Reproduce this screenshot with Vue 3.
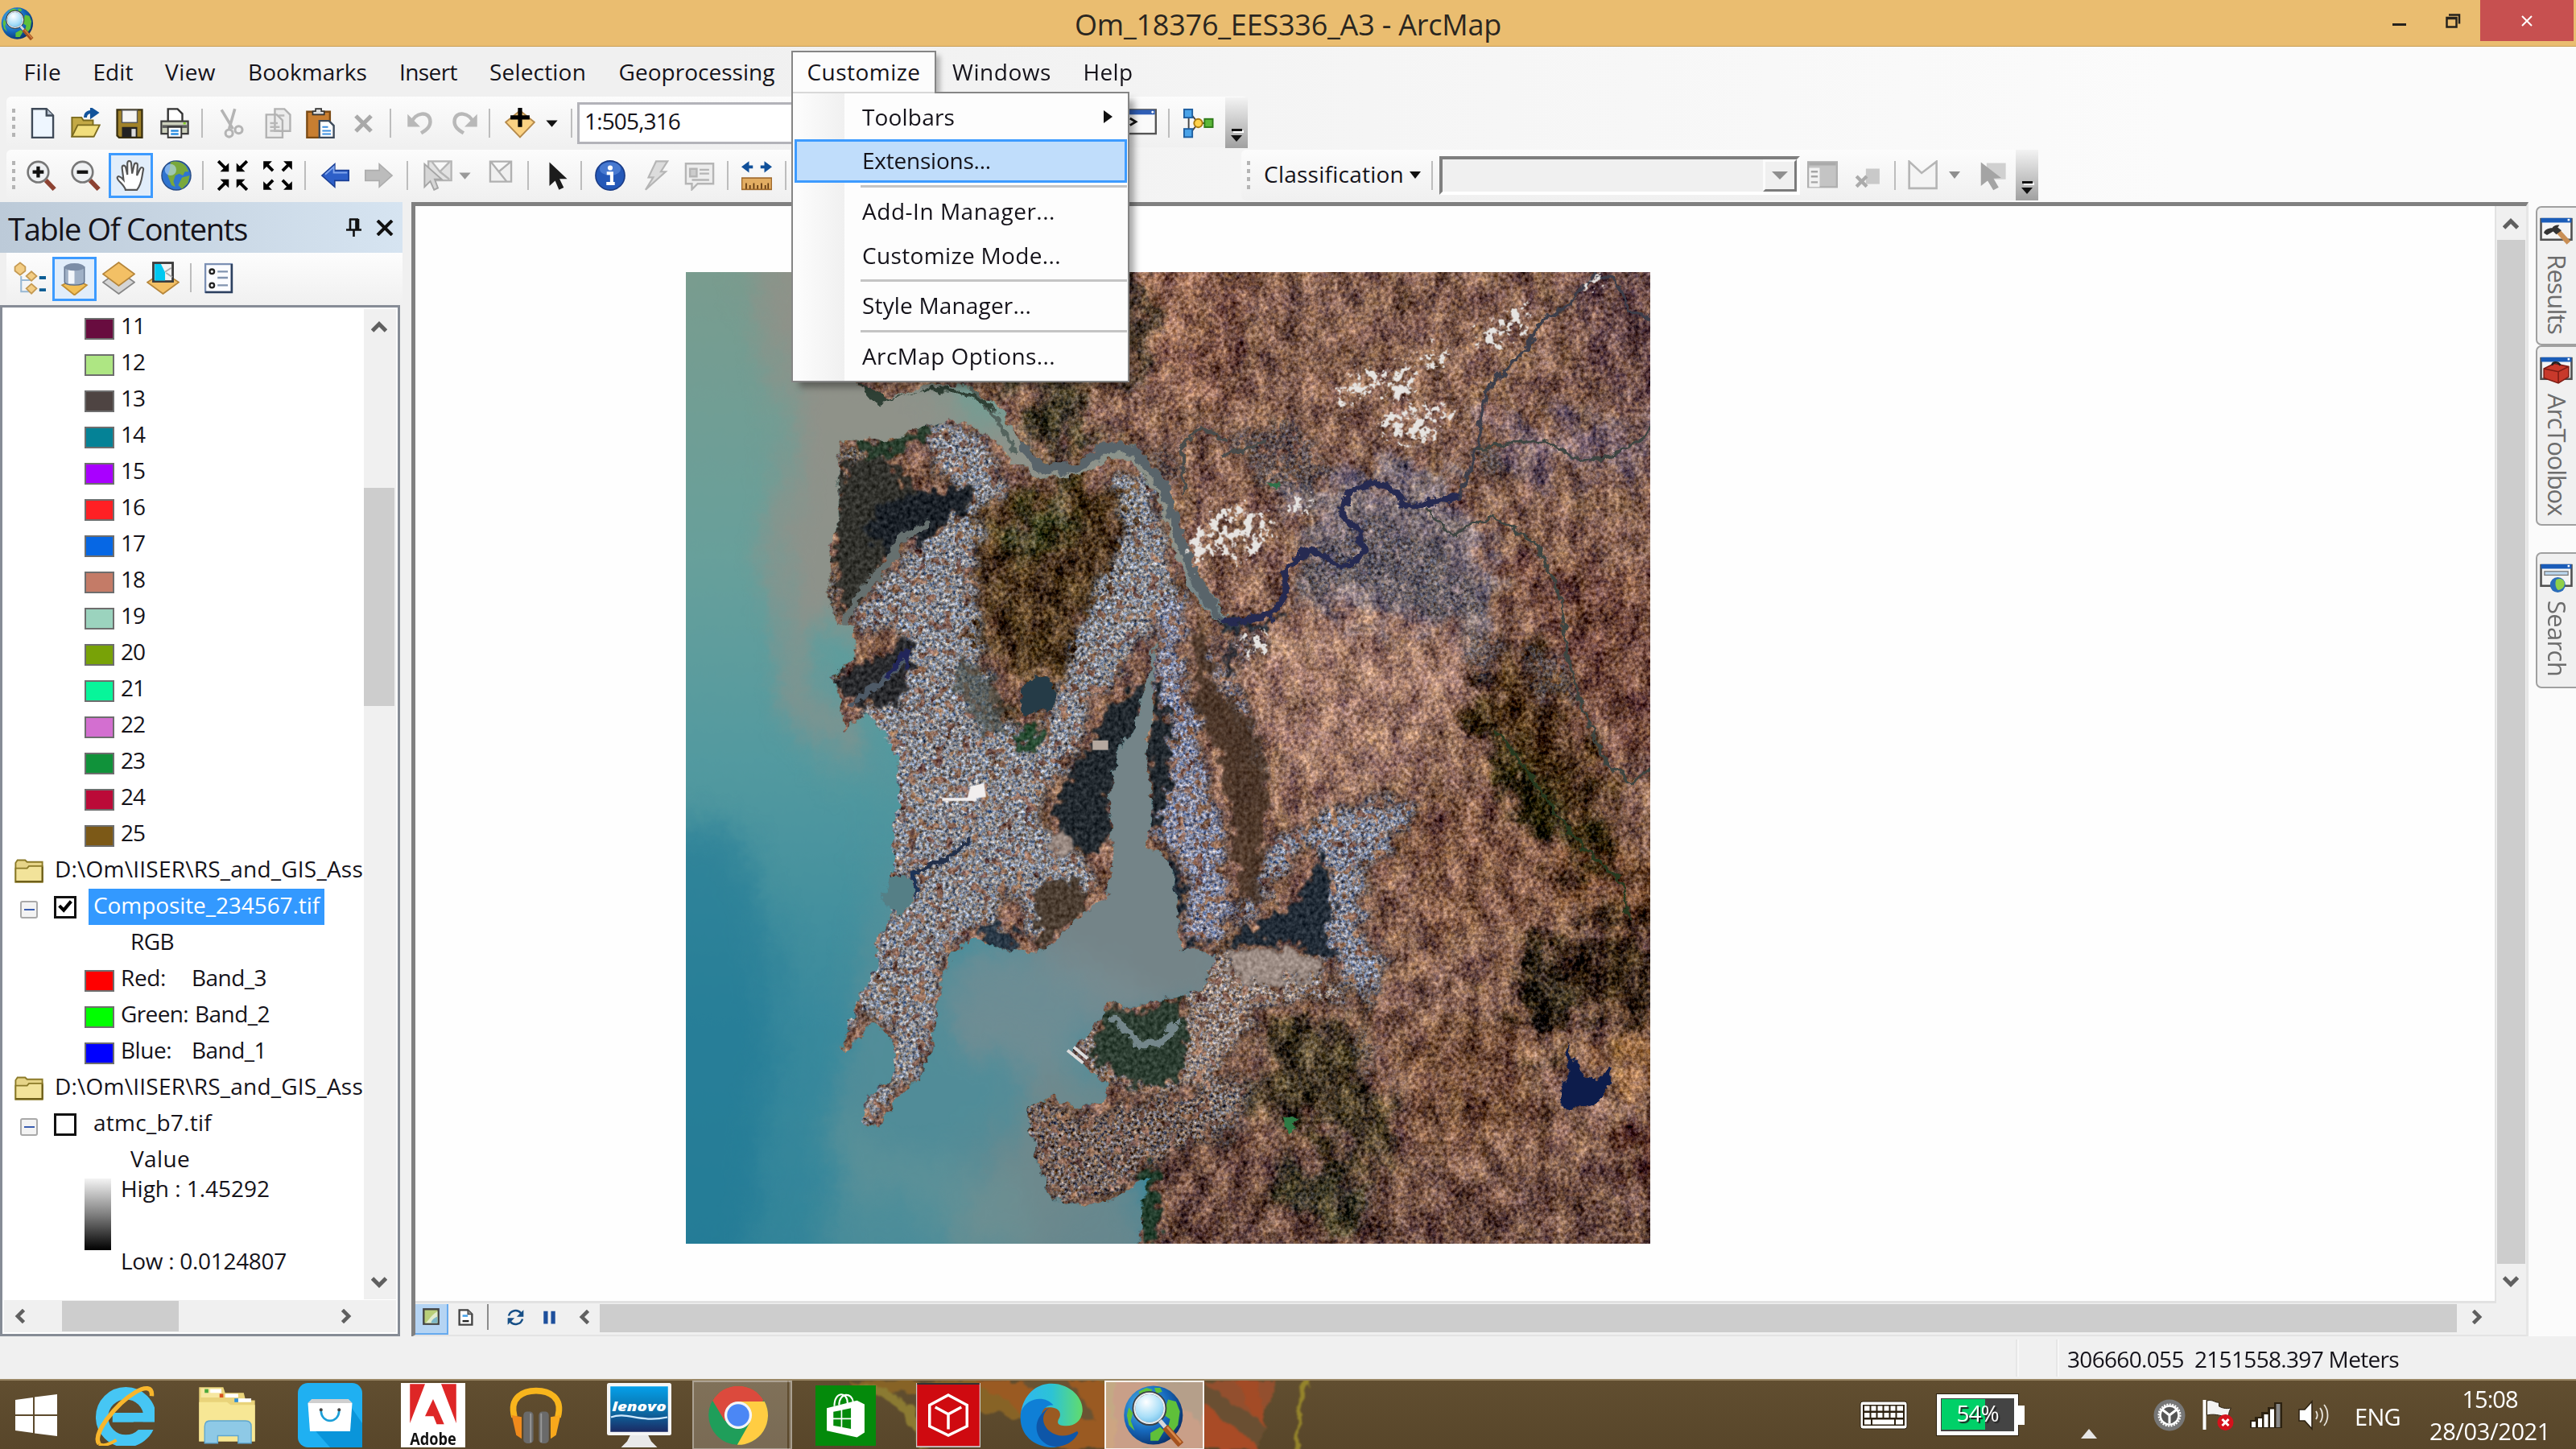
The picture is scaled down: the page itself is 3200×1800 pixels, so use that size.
<script setup>
// Spreads the letters of a label so that it takes the given width in pixels.
const vFit = {
  mounted(el, { value }) {
    if (!value) return
    const n = el.textContent.length
    const natural = el.getBoundingClientRect()
    const size = Math.max(natural.width, natural.height > 60 ? natural.height : 0)
    el.style.letterSpacing = ((value - size) / n).toFixed(3) + 'px'
  }
}

const menus = [
  { t: 'File', w: 86, f: 47 }, { t: 'Edit', w: 89, f: 50 }, { t: 'View', w: 103, f: 63 },
  { t: 'Bookmarks', w: 188, f: 148 }, { t: 'Insert', w: 112, f: 72 }, { t: 'Selection', w: 160, f: 120 },
  { t: 'Geoprocessing', w: 235, f: 194 }, { t: 'Customize', w: 180, f: 141, open: true },
  { t: 'Windows', w: 163, f: 123 }, { t: 'Help', w: 101, f: 62 }
]

const dropdown = [
  { t: 'Toolbars', f: 115, sub: true }, { t: 'Extensions...', f: 160, hot: true }, { sep: true },
  { t: 'Add-In Manager...', f: 240 }, { t: 'Customize Mode...', f: 247 }, { sep: true },
  { t: 'Style Manager...', f: 210 }, { sep: true }, { t: 'ArcMap Options...', f: 240 }
]

// k: icon name, g: gap before it
const standardBar = [
  { k: 'doc', g: 15 }, { k: 'open', g: 15 }, { k: 'save', g: 17 }, { k: 'print', g: 18 }, { sep: 1, g: 14 },
  { k: 'cut', g: 16 }, { k: 'copy', g: 20 }, { k: 'paste', g: 15 }, { k: 'del', g: 20 }, { sep: 1, g: 15 },
  { k: 'undo', g: 18 }, { k: 'redo', g: 19 }, { sep: 1, g: 12 }, { k: 'add', g: 18 }, { k: 'caret', g: 2 }, { sep: 1, g: 4 }
]
const toolsBar = [
  { k: 'zoomin', g: 13 }, { k: 'zoomout', g: 17 }, { k: 'hand', g: 10, on: true }, { k: 'globe', g: 10 }, { sep: 1, g: 13 },
  { k: 'inward', g: 17 }, { k: 'outward', g: 18 }, { sep: 1, g: 14 }, { k: 'back', g: 18 }, { k: 'fwd', g: 15 }, { sep: 1, g: 16 },
  { k: 'selfeat', g: 18 }, { k: 'caretg', g: -4 }, { k: 'clear', g: 8 }, { sep: 1, g: 17 }, { k: 'pointer', g: 18 }, { sep: 1, g: 13 },
  { k: 'info', g: 16 }, { k: 'bolt', g: 19 }, { k: 'note', g: 16 }, { sep: 1, g: 15 }, { k: 'measure', g: 16 }, { sep: 1, g: 16 }
]

const classes = [
  ['11', '#680c3f'], ['12', '#aee683'], ['13', '#4e4442'], ['14', '#058296'], ['15', '#a900ff'],
  ['16', '#ff2024'], ['17', '#0667e4'], ['18', '#c47b67'], ['19', '#9bd3be'], ['20', '#78a207'],
  ['21', '#07f59a'], ['22', '#d36fd0'], ['23', '#10923a'], ['24', '#bb0a38'], ['25', '#7c5917']
]
const bands = [
  { c: '#ff0000', n: 'Red:', nf: 56, w: 88, b: 'Band_3' },
  { c: '#00ff00', n: 'Green:', nf: 84, w: 92, b: 'Band_2' },
  { c: '#0000ff', n: 'Blue:', nf: 63, w: 88, b: 'Band_1' }
]
const docks = [
  { k: 'dResults', t: 'Results', f: 99, h: 173 },
  { k: 'dToolbox', t: 'ArcToolbox', f: 151, h: 224 },
  { k: 'dSearch', t: 'Search', f: 94, h: 169, gap: 33 }
]
const tasks = [
  { k: 'ie', s: 76 }, { k: 'explorer', s: 74 }, { k: 'bag', s: 80 }, { k: 'adobe', s: 80 }, { k: 'phones', s: 72 },
  { k: 'lenovo', s: 80 }, { k: 'chrome', s: 76, run: true }, { k: 'store', s: 75 }, { k: 'cube', s: 80 },
  { k: 'edge', s: 80 }, { k: 'arcmap', s: 78, active: true }
]

const arcGlobe = `
 <circle cx="15.5" cy="16" r="15" fill="url(#ocean)"/>
 <path d="M8 4l4-2 3 1-2 3-4 1zM16 2l3 0 1 2-3 1zM23 8l4 1 2 5-1 7-3 4-2-3 1-4-3-2-2-4 3-1zM3 12l2 3-1 4 2 5-3-3-1-5zM14 25l5-3 2 2-3 5-4 0z" fill="#5fc03a"/>
 <circle cx="13.500" cy="12.500" r="8" fill="url(#lens)" stroke="#3b4045" stroke-width="1.6"/>
 <circle cx="13.500" cy="12.500" r="7.600" fill="none" stroke="#e6ebee" stroke-width=".9"/>
 <path d="M18.800 18.800l3 3.500" stroke="#d8d8d8" stroke-width="2.200"/>
 <path d="M21.500 22l8 9" stroke="#a4521f" stroke-width="3.600"/><path d="M22.500 22l7 8" stroke="#d98a4a" stroke-width="1"/>`

const dockWindow = `<rect x=".6" y="2" width="14.800" height="10" fill="#f4f4f4" stroke="#505050" stroke-width="1"/><rect x=".6" y="1.500" width="14.800" height="2.200" fill="#1a5cb8"/><rect x="13.500" y="1.900" width="1" height="1" fill="#fff"/>`

const ic = {
  doc: `<path d="M2.500.5h7.500l3.500 3.500v11.500h-11z" fill="#eef6ff" stroke="#3f4a58"/><path d="M10 .5v3.500h3.500" fill="#b9c4d2" stroke="#3f4a58"/>`,
  open: `<path d="M1 5h5l1 1.500h5v8.500H1z" fill="#c3a945" stroke="#7a6a1e" stroke-width=".8"/><path d="M1 15l3-6h11.500l-3 6z" fill="#f1de7c" stroke="#7a6a1e" stroke-width=".8"/><path d="M8 5c0-2 1.500-3 4-3" fill="none" stroke="#12539b" stroke-width="1.600"/><path d="M11 .2L14.500 2.500 11 5z" fill="#12539b" stroke="#12539b" stroke-width="1"/>`,
  save: `<path d="M1.500 1h13v14.500h-12l-1-1z" fill="#a0822a" stroke="#3a3010"/><rect x="4" y="1.200" width="8" height="6.500" fill="#f5f5f5" stroke="#555" stroke-width=".6"/><rect x="4" y="10" width="8" height="5.300" fill="#222"/><rect x="9" y="11" width="2.200" height="4" fill="#ddd"/>`,
  print: `<path d="M4.500 7V.6h5l2.500 2.500V7" fill="#fff" stroke="#333"/><path d="M1 7h14v6.500H1z" fill="#ccd0bc" stroke="#3c3c3c" stroke-width=".9"/><rect x="1.500" y="9" width="13" height="1.500" fill="#5c5c5c"/><rect x="12.500" y="7.600" width="1.300" height="1" fill="#80d020"/><path d="M4.500 10h7v5.500h-7z" fill="#fff" stroke="#333" stroke-width=".8"/><path d="M6 12h4M6 13.700h4" stroke="#2c8de0" stroke-width="1"/>`,
  cut: `<path d="M3 1l6 10M10 .5L7 11" stroke="#b4b4b4" stroke-width="1.500" fill="none"/><circle cx="7" cy="13.300" r="1.900" fill="none" stroke="#b4b4b4" stroke-width="1.300"/><circle cx="12" cy="11.500" r="1.900" fill="none" stroke="#b4b4b4" stroke-width="1.300"/>`,
  copy: `<path d="M6.500.6h5l3 3v8.500h-8zM2 3.500h5.500l3 3v9H2z" fill="#ececec" stroke="#b2b2b2"/><path d="M4 8h4M4 10h5M4 12h5M8.500 4h3" stroke="#b8b8b8"/>`,
  paste: `<path d="M1 2h12v13.500H1z" fill="#c87e31" stroke="#7b4a14"/><path d="M4 3.500h6V1.800H8.500V.5h-3v1.300H4z" fill="#ddd" stroke="#333" stroke-width=".7"/><path d="M7.500 6.800h5l2.500 2.500v6.200H7.500z" fill="#fff" stroke="#3d4a5a"/><path d="M9 10h3M9 12h4.500M9 13.700h4.500" stroke="#3d8fe0" stroke-width=".9"/>`,
  del: `<path d="M2.500 3.500l9.500 9.500M12 3.500l-9.500 9.500" stroke="#a9a9a9" stroke-width="2.600"/>`,
  undo: `<path d="M3 8c2-6 10-7 10.500-1.500C14 10 11 12 8.500 13.500" fill="none" stroke="#b8b8b8" stroke-width="2"/><path d="M1 3v7h7z" fill="#b8b8b8"/>`,
  redo: `<path d="M13 8c-2-6-10-7-10.500-1.500C2 10 5 12 7.500 13.500" fill="none" stroke="#b8b8b8" stroke-width="2"/><path d="M15 3v7H8z" fill="#b8b8b8"/>`,
  add: `<path d="M.5 7.500L8 1.500l7.500 6L8 15.300z" fill="#fbd283" stroke="#b58a4c" stroke-width=".8"/><path d="M8 0v10M3 5h10" stroke="#000" stroke-width="2.200"/>`,
  caret: `<path d="M4.800 6.500h6L7.800 10z" fill="#111"/>`,
  caretg: `<path d="M4.800 6.500h6L7.800 10z" fill="#999"/>`,
  zoomin: `<circle cx="6.500" cy="6.200" r="5.400" fill="#eef0f2" stroke="#777" stroke-width="1.100"/><path d="M6.500 3.300v5.800M3.600 6.200h5.800" stroke="#111" stroke-width="1.800"/><path d="M10.500 10.500l4.500 4.700" stroke="#8d4232" stroke-width="2.400"/>`,
  zoomout: `<circle cx="6.500" cy="6.200" r="5.400" fill="#eef0f2" stroke="#777" stroke-width="1.100"/><path d="M3.600 6.200h5.800" stroke="#111" stroke-width="1.800"/><path d="M10.500 10.500l4.500 4.700" stroke="#8d4232" stroke-width="2.400"/>`,
  hand: `<path d="M5 15.500C4.500 13 1 11 .7 9.300c0-1.200 1.500-1.200 3.300 1L3.200 4c0-1.600 1.600-1.600 2 0l.8 3.600L6 1.700c0-1.700 1.900-1.700 2 0L8.500 7l1-4.500c.4-1.500 2-1.200 1.800.3L11 8l1.600-3.500c.7-1.200 2-.7 1.700.5C13.500 8.500 13.800 12 11 15.500z" fill="#fff" stroke="#555" stroke-width=".9"/>`,
  globe: `<circle cx="8" cy="8" r="7.600" fill="#2f74cf" stroke="#274a82" stroke-width=".6"/><path d="M5 1c3-1 6 0 8 2l1.500 3-2 0-1 2-2-1-2 1-1 3 1 3-2-1-2-5 1-3zM11 9l4-1-1 4-3 3-2-2z" fill="#79a83b"/><ellipse cx="5" cy="5" rx="3" ry="3" fill="#b9dcff" opacity=".6"/>`,
  inward: `<path d="M.5.5l4 4M15.500.5l-4 4M.5 15.500l4-4M15.500 15.500l-4-4" stroke="#000" stroke-width="1.600"/><path d="M6 1.500v4.500H1.500zM10 1.500v4.500h4.500zM6 14.500v-4.500H1.500zM10 14.500v-4.500h4.500z" fill="#000"/>`,
  outward: `<path d="M1.500 1.500l4 4M14.500 1.500l-4 4M1.500 14.500l4-4M14.500 14.500l-4-4" stroke="#000" stroke-width="1.600"/><path d="M.5 5v-4.500h4.500zM15.500 5v-4.500h-4.500zM.5 11v4.500h4.500zM15.500 11v4.500h-4.500z" fill="#000"/>`,
  back: `<path d="M.8 8L7.500 2v3.300h7.300v5.400H7.500V14z" fill="#2d5fc8" stroke="#1a3f95" stroke-width=".7"/><path d="M2.500 7.500L7 3.500v3h7" fill="none" stroke="#7fa4ec" stroke-width=".8"/>`,
  fwd: `<path d="M15.200 8L8.500 2v3.300H1.200v5.400h7.300V14z" fill="#bcbcbc" stroke="#acacac" stroke-width=".7"/>`,
  selfeat: `<path d="M3 .6h12v10H3zM5 1l4 5 5-5M9 6l5 4" fill="#e2e2e2" stroke="#b5b5b5"/><path d="M1 2v12l3-3 2 4.500 2-1L6.300 10H10z" fill="#d6d6d6" stroke="#a5a5a5" stroke-width=".8"/>`,
  clear: `<path d="M2.500.7h11v10.500h-11zM3 1l4 5 6-5M7 6l4 5" fill="#f0f0f0" stroke="#b0b0b0"/>`,
  pointer: `<path d="M4 1v12.500l3-2.800 2 4.800 2.500-1.200-2.200-4.500h4z" fill="#1c1c1c"/>`,
  info: `<circle cx="8" cy="8" r="7.600" fill="#2458b8" stroke="#1a3c86" stroke-width=".7"/><ellipse cx="8" cy="4.500" rx="5.500" ry="3.500" fill="#5f90e0" opacity=".6"/><circle cx="8" cy="4" r="1.300" fill="#fff"/><path d="M6.200 6.800h2.600v5M6 12.200h4.400" stroke="#fff" stroke-width="1.700" fill="none"/>`,
  bolt: `<path d="M8 .6h6L10.500 6H13L2.500 15.500 6.500 9H4z" fill="#dcdcdc" stroke="#b5b5b5" stroke-width=".9"/>`,
  note: `<path d="M.8 1.800h14.400v10.500H7L4 15.300v-3H.8z" fill="#ededed" stroke="#b5b5b5"/><path d="M3 4.500h3.500v4H3zM8 5h5M8 7h5M4 10.300h9" stroke="#b5b5b5" fill="#ccc"/>`,
  measure: `<path d="M0 3.500L4 .5v6zM16 3.500L12 .5v6z" fill="#10509a"/><path d="M3 3.500h3M10 3.500h3" stroke="#10509a" stroke-width="1.600"/><rect x=".2" y="9.300" width="15.600" height="6" fill="#e2ad62" stroke="#a06a2c" stroke-width=".7"/><path d="M2.500 12v3M4.500 13v2M6.500 12v3M8.500 13v2M10.500 12v3M12.500 13v2M14 12v3" stroke="#5c3510" stroke-width=".7"/>`,
  cmd: `<rect x=".5" y="1" width="15" height="12.500" fill="#fafafa" stroke="#555"/><rect x="1" y="1" width="14" height="2.500" fill="#2f5eb5"/><circle cx="13.800" cy="2.200" r=".6" fill="#fff"/><path d="M2 5.500l3 1.800-3 1.800" stroke="#111" stroke-width="1.200" fill="none"/>`,
  model: `<path d="M3 4v8M4 3l4 5-4 5M8 8h6" stroke="#444" stroke-width=".8" fill="none"/><rect x=".6" y=".8" width="4.300" height="4.300" fill="#4aa3e8" stroke="#1f5fa0" stroke-width=".8"/><rect x=".6" y="11" width="4.300" height="4.300" fill="#4aa3e8" stroke="#1f5fa0" stroke-width=".8"/><circle cx="8" cy="8" r="2.200" fill="#ffd24a" stroke="#a87a10" stroke-width=".8"/><rect x="11.300" y="5.800" width="4.300" height="4.300" fill="#5cb83a" stroke="#2d7a18" stroke-width=".8"/>`,
  cForm: `<rect x=".5" y="1" width="15" height="13" fill="#c4c4c4" stroke="#b0b0b0"/><rect x="1" y="4" width="5.500" height="10" fill="#f2f2f2"/><path d="M2 6h3.500M2 8.500h3.500M2 11.500h3.500" stroke="#a5a5a5"/><path d="M1 2h14" stroke="#aaa" stroke-width="1.500"/>`,
  cDel: `<rect x="7" y="4" width="8" height="9" fill="#c9c9c9"/><path d="M1.500 8.500l6 6M7.500 8.500l-6 6" stroke="#ababab" stroke-width="2"/>`,
  cPoly: `<path d="M.7.700l6.500 6L15 .7v14H.7z" fill="#f4f4f4" stroke="#b5b5b5" stroke-width="1.100"/>`,
  cPick: `<rect x="5" y="1.500" width="10" height="8.500" fill="#d0d0d0"/><path d="M2 1v12.500l3.500-2.800 3 5 2.800-1.500-2.700-4.600 4-.3z" fill="#a4a4a4"/>`,
  tList: `<path d="M4 7v7.500h5M4 9h5" fill="none" stroke="#98b8d4" stroke-width=".8"/><path d="M1 2.500L3.500.5 6 2.500v2L3.500 6.500 1 4.500zM6.500 7L9 4.800 11.500 7 9 9.300zM6.500 13L9 10.800l2.500 2.200L9 15.500z" fill="#f3cd84" stroke="#c59a52" stroke-width=".7"/><path d="M12.800 7.800H16M12.800 13.700H16" stroke="#0b5d94" stroke-width="1.500"/>`,
  tSource: `<path d="M2 11l6-3 6 3-6 4.800z" fill="#f2bf55" stroke="#c08d33" stroke-width=".7"/><path d="M3.200 2.200v7.300c0 2 9.600 2 9.600 0V2.200z" fill="#9fb0c6" stroke="#5a6b86" stroke-width=".5"/><path d="M5 3v7.300h3V3z" fill="#f2f6fb"/><ellipse cx="8" cy="2.200" rx="4.800" ry="1.800" fill="#7c8da6"/>`,
  tVis: `<path d="M.4 10L8 4.500l7.600 5.500L8 15.600z" fill="#d5d5d5" stroke="#868686" stroke-width=".7"/><path d="M.4 6L8 .4 15.600 6 8 11.700z" fill="#f3c065" stroke="#b5853a" stroke-width=".7"/>`,
  tSel: `<path d="M.4 10L8 5l7.600 5L8 15.600z" fill="#f3c065" stroke="#b5853a" stroke-width=".7"/><rect x="3.300" y=".6" width="9.400" height="9" fill="#f2f2f2" stroke="#3c3c3c" stroke-width="1.100"/><path d="M4 1.200h3l2 4v4H4z" fill="#00c8f0"/><path d="M9 5l3-2M9.500 5.500l3 2" stroke="#aaa" stroke-width=".7"/>`,
  tOpt: `<rect x="1.600" y="1.200" width="12.800" height="13.600" fill="#fbfcff" stroke="#7c90b4" stroke-width=".9"/><path d="M14.400 1.200v13.600H1.600" fill="none" stroke="#2c405f" stroke-width="1"/><circle cx="4.800" cy="4.800" r="1.100" fill="none" stroke="#222" stroke-width=".9"/><circle cx="4.800" cy="11.500" r="1.100" fill="none" stroke="#222" stroke-width=".9"/><path d="M7.500 4.800h5M7.500 7.800h5M7.500 11.500h5" stroke="#8193af" stroke-width=".9"/>`,
  folder: `<path d="M1 3.500l1-1.500h4l1 1h8v11H1z" fill="#e6d488" stroke="#8b7a28" stroke-width=".8"/><path d="M1 14V6.500h6l1-1.200h7V14z" fill="#f2e39a" stroke="#8b7a28" stroke-width=".8"/><path d="M1 13.700h14v-8" fill="none" stroke="#6b5c18" stroke-width=".8"/>`,
  dResults: dockWindow + `<path d="M8.500 7.500l5.500 6" stroke="#c98f55" stroke-width="2.400"/><path d="M2 8.800c0-1.500 2-2.500 4-2.500.8-1 2-1.600 3.500-1.300L8.700 6l1.800 1.500L8 9.500 6.500 8 3.500 9.800z" fill="#333"/>`,
  dToolbox: dockWindow + `<path d="M2 7l5-2.500 7 1.500v5l-5 3-7-2.500z" fill="#c8392b" stroke="#7d1c14" stroke-width=".6"/><path d="M2 7l7 1.500 5-2.500M9 8.500V14" stroke="#7d1c14" stroke-width=".6" fill="none"/><path d="M6 5.500C6 3.500 9 3.500 10 5.500" stroke="#222" stroke-width=".9" fill="none"/>`,
  dSearch: dockWindow + `<rect x="2.300" y="5" width="11.400" height="1.800" fill="#bcd8f0" stroke="#777" stroke-width=".5"/><circle cx="8.700" cy="11.500" r="3.700" fill="#2a6cb8"/><path d="M8 9c2-1 4 0 4 2s-2 3-3 3-2-3-1-5z" fill="#8fd04a"/>`,
  viewMap: `<rect x="1" y="1" width="14" height="14" fill="#b9cf7a" stroke="#444" stroke-width="1.800"/><path d="M2 14c3 0 4-6 12-11v11z" fill="#e2eccf"/><path d="M8 14c1-4 4-5 6-6v6z" fill="#7db8c8"/>`,
  viewDoc: `<path d="M2 1h8l4 4v10H2z" fill="#fff" stroke="#444" stroke-width="1.800"/><path d="M10 1v4h4" fill="#888" stroke="#444"/><path d="M5 6.500h5" stroke="#4aa3e8" stroke-width="2"/><path d="M5 11.500h6" stroke="#222" stroke-width="1.800"/>`,
  refresh: `<path d="M1.500 6.500C3 1 10 0 13 4M14.500 9.500C13 15 6 16 3 12" fill="none" stroke="#174f86" stroke-width="1.900"/><path d="M15.500 1v6.500H9zM.5 15V8.500H7z" fill="#174f86"/>`,
  pause: `<path d="M2.500 2h4v12h-4zM9.500 2h4v12h-4z" fill="#1d4f9c"/>`,
  arcmap: arcGlobe,
  ie: `<circle cx="17" cy="17" r="12.500" fill="none" stroke="#46c6f4" stroke-width="6.500"/><path d="M10 17.200h18" stroke="#46c6f4" stroke-width="5"/><path d="M21 19.600h11v4H21z" fill="#5c4a2d"/><path d="M3 31C-1 26 12 10 22 4c5-3 9-3 8.500 2" fill="none" stroke="#f8b62c" stroke-width="2.300"/><path d="M3 31c2 1.500 6 0 9-2" fill="none" stroke="#f8b62c" stroke-width="1.600"/>`,
  explorer: `<path d="M1 1h13l1 3h10l1 4h5v22H1z" fill="#e9d37a"/><path d="M2 1.500h11v5H2z" fill="#f6e7a0"/><rect x="7" y="2" width="6" height="2" fill="#fff"/><rect x="4" y="2" width="2" height="2" fill="#4aa83c"/><rect x="15" y="4.500" width="7" height="2" fill="#fff"/><rect x="12" y="4.500" width="2" height="2" fill="#d9531e"/><rect x="22" y="7" width="7" height="2" fill="#fff"/><rect x="20" y="7" width="2" height="2" fill="#2f8fd8"/><path d="M1 9h15l2 1.500h13V30H1z" fill="#f7e795"/><path d="M4 31V22c0-2 1-3 3-3h19c2 0 3 1 3 3v9h-7v-4H11v4z" fill="#8ec9e6" stroke="#5fa6cf" stroke-width=".6"/>`,
  bag: `<rect width="32" height="32" rx="5" fill="#1fb0f2"/><path d="M26.500 12L32 20v12H16L8 23z" fill="#0a95da"/><path d="M5 10l2-2h18l2 2-1 14H6z" fill="#fff"/><path d="M5 10l2-2h18l2 2z" fill="#cfcfcf"/><path d="M11.500 13.500c0 7 9 7 9 0" fill="none" stroke="#1c9fd8" stroke-width="1.100"/><circle cx="11.500" cy="13.300" r=".8" fill="#444"/><circle cx="20.500" cy="13.300" r=".8" fill="#444"/>`,
  adobe: `<rect width="32" height="32" fill="#fff"/><path d="M4.500.5h7.500L4.500 20zM20 .5h7.500V20zM16 8l5.500 12.500h-3.700l-1.600-4H12z" fill="#de2626"/><text x="16" y="30.800" font-family="Open Sans, sans-serif" font-weight="700" font-size="8.400" textLength="23" lengthAdjust="spacingAndGlyphs" text-anchor="middle" fill="#111">Adobe</text>`,
  phones: `<path d="M4 17C1 6 9 2.500 16 2.500S31 6 28 17" fill="none" stroke="#f8b51c" stroke-width="3.400"/><path d="M2.500 16l5.500 1v12l-3-2z" fill="#f08a1c"/><path d="M29.500 16l-5.500 1v12l3-2z" fill="#f8a81c"/><rect x="9" y="14" width="5.500" height="17.500" rx="2" fill="#6a6a6a"/><rect x="17.500" y="14" width="5.500" height="17.500" rx="2" fill="#6a6a6a"/><path d="M13 15v16M18.800 15v16" stroke="#9a9a9a" stroke-width=".8"/>`,
  lenovo: `<path d="M12 25h8l2 4 3 3H7l3-3z" fill="#e9e9e9"/><rect width="32" height="26" rx="1" fill="#f6f6f6"/><rect x="1.700" y="1.700" width="28.600" height="22.600" fill="url(#lenscr)"/><text x="16" y="14" font-family="Open Sans, sans-serif" font-style="italic" font-weight="800" font-size="6" textLength="27" lengthAdjust="spacingAndGlyphs" text-anchor="middle" fill="#fff">lenovo</text><path d="M2 17c8-3 14 3 28 0" stroke="#cfeaff" stroke-width=".9" fill="none"/>`,
  chrome: `<circle cx="16" cy="16" r="15.500" fill="#1f9e5a"/><path d="M16 16L2.600 8.300A15.500 15.500 0 0129.400 8.300z" fill="#dc4a3d"/><path d="M2.600 8.300L9 19l7-3 0-8z" fill="#dc4a3d"/><path d="M16 8.800h13.800A15.500 15.500 0 0115.500 31.500L22 20z" fill="#ffcd42"/><circle cx="16" cy="16" r="7.200" fill="#f5f5f5"/><circle cx="16" cy="16" r="5.800" fill="#4b87f5"/>`,
  store: `<rect width="32" height="32" fill="#048a0b"/><path d="M6 12l16-4 4 2v15l-4 2.500L6 24z" fill="#fff"/><path d="M10 11c0-8 7-8 7-1.500M12.500 10.500c0-7 7-7 7.500-1.500" fill="none" stroke="#fff" stroke-width=".9"/><path d="M9.500 14l4-.8V17.300h-4zM14.200 13l4.600-.9v5.200h-4.600zM9.500 18h4v4l-4-.7zM14.200 18h4.600v5l-4.600-.8z" fill="#048a0b"/>`,
  cube: `<rect width="32" height="32" fill="#c8c8c8"/><rect x=".5" width="31" height="31.300" fill="#cf0a10"/><rect x=".5" width="31" height=".8" fill="#333"/><path d="M16 6l9.300 5v10.500L16 26l-9.300-4.500V11zM9.500 12l6.500 3.500L22.500 12M16 15.500V23" fill="none" stroke="#fff" stroke-width="1.400"/>`,
  edge: `<path d="M1 14C3 4 10 .3 16 .3 26 .3 32 8 31.500 14c-.5 5-4 7.300-8 7.300-5 0-4.700-2-3.500-4 1-2 0-4.500-3-5C9 11 2 17 2.500 22 1 19 .5 17 1 14z" fill="url(#edgeTop)"/><path d="M1 14c3-7 12-8 16-3-5 0-6.500 4-6 8 1 8 9 12 15 9-3 3-7 4-10 4C6 31.500-1 24 1 14z" fill="#0f7fd6"/><path d="M15 12.300c-4 3-4 8 0 11.500 4 3.300 9 3 13.500.3 1 0 1 .7.500 1.500-3 5-9 7-14 5.500-8-3-9-14 0-18.800z" fill="#0e56a8"/>`
}
</script>

<template>
  <div class="screen">
    <svg class="defs" width="0" height="0">
      <defs>
        <radialGradient id="ocean" cx=".35" cy=".35" r=".75">
          <stop offset="0" stop-color="#5bc6f2" /><stop offset=".55" stop-color="#1669bd" /><stop offset="1" stop-color="#08295e" />
        </radialGradient>
        <radialGradient id="lens" cx=".4" cy=".3" r=".8">
          <stop offset="0" stop-color="#ffffff" /><stop offset=".6" stop-color="#a8def8" /><stop offset="1" stop-color="#5fb4e4" />
        </radialGradient>
        <linearGradient id="edgeTop"><stop offset="0" stop-color="#2fb6f0" /><stop offset=".5" stop-color="#2cc3d6" /><stop offset="1" stop-color="#62dc6c" /></linearGradient>
        <linearGradient id="lenscr" x2="0" y2="1"><stop offset="0" stop-color="#05a0ea" /><stop offset=".5" stop-color="#0a73ad" /><stop offset="1" stop-color="#1b2a63" /></linearGradient>
      </defs>
    </svg>

    <header class="titlebar">
      <svg class="appicon" viewBox="0 0 32 32" v-html="ic.arcmap"></svg>
      <h1 v-fit="530">Om_18376_EES336_A3 - ArcMap</h1>
      <div class="caption">
        <i class="min"></i>
        <svg width="20" height="18" viewBox="0 0 20 18"><path d="M4 1.500h13v11M1.500 5h12v11.500h-12zM1 6h13" fill="none" stroke="#26221c" stroke-width="2.500" /></svg>
        <b><svg width="16" height="14" viewBox="0 0 16 14"><path d="M2 1l12 12M14 1L2 13" stroke="#fff" stroke-width="2" /></svg></b>
      </div>
    </header>

    <nav class="menubar">
      <div v-for="m in menus" :key="m.t" class="menu" :class="{ open: m.open }" :style="{ width: m.w + 'px' }">
        <span v-fit="m.f">{{ m.t }}</span>
        <div v-if="m.open" class="dropdown">
          <template v-for="(d, i) in dropdown" :key="i">
            <hr v-if="d.sep">
            <div v-else class="entry" :class="{ hot: d.hot }">
              <span v-fit="d.f">{{ d.t }}</span>
              <i v-if="d.sub" class="arrow"></i>
            </div>
          </template>
        </div>
      </div>
    </nav>

    <div class="bars">
      <div class="bar standard">
        <i class="grip"></i>
        <template v-for="(b, i) in standardBar" :key="i">
          <i v-if="b.sep" class="sep" :style="{ marginLeft: b.g + 'px' }"></i>
          <svg v-else class="ico" :class="b.k" viewBox="0 0 16 16" :style="{ marginLeft: b.g + 'px' }" v-html="ic[b.k]"></svg>
        </template>
        <div class="scale"><span v-fit="119">1:505,316</span></div>
        <svg class="ico" viewBox="0 0 16 16" v-html="ic.cmd"></svg>
        <i class="sep m14"></i>
        <svg class="ico model" viewBox="0 0 16 16" v-html="ic.model"></svg>
        <div class="endcap"><i></i><b></b></div>
      </div>
      <div class="row2">
        <div class="bar tools">
          <i class="grip"></i>
          <template v-for="(b, i) in toolsBar" :key="i">
            <i v-if="b.sep" class="sep" :style="{ marginLeft: b.g + 'px' }"></i>
            <div v-else class="slot" :class="[b.k, { on: b.on }]" :style="{ marginLeft: b.g + 'px' }">
              <svg class="ico" viewBox="0 0 16 16" v-html="ic[b.k]"></svg>
            </div>
          </template>
        </div>
        <div class="bar classbar">
          <i class="grip"></i>
          <span v-fit="174" class="cls">Classification</span>
          <i class="tri"></i>
          <i class="sep m14"></i>
          <div class="combo"><div class="btn"><i class="tri gray"></i></div></div>
          <svg class="ico c1" viewBox="0 0 16 16" v-html="ic.cForm"></svg>
          <svg class="ico c2" viewBox="0 0 16 16" v-html="ic.cDel"></svg>
          <i class="sep c3"></i>
          <svg class="ico c4" viewBox="0 0 16 16" v-html="ic.cPoly"></svg>
          <i class="tri gray c5"></i>
          <svg class="ico c6" viewBox="0 0 16 16" v-html="ic.cPick"></svg>
          <div class="endcap"><i></i><b></b></div>
        </div>
      </div>
    </div>

    <main class="work">
      <aside class="toc">
        <div class="tochead">
          <h2><span v-fit="297">Table Of Contents</span></h2>
          <svg width="20" height="24" viewBox="0 0 20 24"><path d="M4 1.500h11M5 1v13M12.500 1v13M15 1v13M0 14.500h19M9.500 14v9" fill="none" stroke="#111" stroke-width="2.600" /></svg>
          <svg class="x" width="22" height="20" viewBox="0 0 22 20"><path d="M2 1l18 18M20 1L2 19" stroke="#111" stroke-width="4" /></svg>
        </div>
        <div class="toctools">
          <svg class="big" viewBox="0 0 16 16" v-html="ic.tList"></svg>
          <div class="slot on"><svg class="big" viewBox="0 0 16 16" v-html="ic.tSource"></svg></div>
          <svg class="big t3" viewBox="0 0 16 16" v-html="ic.tVis"></svg>
          <svg class="big t4" viewBox="0 0 16 16" v-html="ic.tSel"></svg>
          <i class="sep"></i>
          <svg class="big t5" viewBox="0 0 16 16" v-html="ic.tOpt"></svg>
        </div>
        <div class="treebox">
          <div class="treerow">
            <div class="tree">
              <div v-for="c in classes" :key="c[0]" class="node leaf"><i class="sw" :style="{ background: c[1] }"></i><span v-fit="30">{{ c[0] }}</span></div>
              <div class="node path"><svg class="fold" viewBox="0 0 16 16" preserveAspectRatio="none" v-html="ic.folder"></svg><span v-fit="383">D:\Om\IISER\RS_and_GIS_Ass</span></div>
              <div class="node layer"><i class="minus"></i><i class="check"><svg viewBox="0 0 24 22"><path d="M4 10l6 6L20 4" fill="none" stroke="#000" stroke-width="4.500" /></svg></i><em><span v-fit="281">Composite_234567.tif</span></em></div>
              <div class="node label"><span v-fit="54">RGB</span></div>
              <div v-for="b in bands" :key="b.n" class="node leaf"><i class="sw low" :style="{ background: b.c }"></i><div class="chan" :style="{ width: b.w + 'px' }"><span v-fit="b.nf">{{ b.n }}</span></div><span v-fit="93">{{ b.b }}</span></div>
              <div class="node path"><svg class="fold" viewBox="0 0 16 16" preserveAspectRatio="none" v-html="ic.folder"></svg><span v-fit="383">D:\Om\IISER\RS_and_GIS_Ass</span></div>
              <div class="node layer"><i class="minus"></i><i class="check"></i><em class="off"><span v-fit="147">atmc_b7.tif</span></em></div>
              <div class="node label"><span v-fit="74">Value</span></div>
              <div class="stretch"><i class="ramp"></i><div><span v-fit="185">High : 1.45292</span><span v-fit="206">Low : 0.0124807</span></div></div>
            </div>
            <div class="vscroll"><svg class="chev" viewBox="0 0 20 16"><path d="M1.500 13L10 4.500l8.500 8.500" /></svg><i></i><svg class="chev dn" viewBox="0 0 20 16"><path d="M1.500 3L10 11.500 18.500 3" /></svg></div>
          </div>
          <div class="hscroll"><svg class="chev" viewBox="0 0 16 20"><path d="M13 1.500L4.500 10l8.500 8.500" /></svg><i></i><svg class="chev rt" viewBox="0 0 16 20"><path d="M3 1.500l8.500 8.500L3 18.500" /></svg></div>
        </div>
      </aside>

      <section class="mapwin">
        <div class="mapmain">
          <div class="canvas">
            <svg class="raster" viewBox="16 22 1539 1527" preserveAspectRatio="none">
              <defs>
                <filter id="landN" x="0" y="0" width="1" height="1" color-interpolation-filters="sRGB">
                  <feTurbulence type="fractalNoise" baseFrequency=".02" numOctaves="6" seed="4" result="t" />
                  <feDisplacementMap in="SourceGraphic" in2="t" scale="150" xChannelSelector="R" yChannelSelector="G" result="d" />
                  <feTurbulence type="fractalNoise" baseFrequency=".16" numOctaves="4" seed="9" />
                  <feColorMatrix values="1 .1 0 0 0  .9 .1 .1 0 0  .8 0 .3 0 0  0 0 0 0 1" result="n" />
                  <feComposite in="d" in2="n" operator="arithmetic" k2="1" k3=".7" k4="-.385" result="a" />
                  <feTurbulence type="fractalNoise" baseFrequency=".035 .022" numOctaves="6" seed="31" />
                  <feColorMatrix values="1.050 0 0 0 0  .9 .05 0 0 .02  .7 0 .15 0 .060  0 0 0 0 1" result="m" />
                  <feComposite in="a" in2="m" operator="arithmetic" k2="1" k3=".62" k4="-.31" />
                </filter>
                <filter id="cityN" x="-.1" y="-.1" width="1.200" height="1.200" color-interpolation-filters="sRGB">
                  <feTurbulence type="fractalNoise" baseFrequency=".04" numOctaves="5" seed="3" result="t" />
                  <feDisplacementMap in="SourceGraphic" in2="t" scale="60" xChannelSelector="R" yChannelSelector="G" />
                  <feGaussianBlur stdDeviation="6" result="d" />
                  <feTurbulence type="fractalNoise" baseFrequency=".19" numOctaves="4" seed="12" result="f" />
                  <feColorMatrix values="1.100 .5 0 0 -.3  1.100 .3 .2 0 -.3  1.100 0 .5 0 -.3  0 0 0 0 1" result="n" />
                  <feComposite in="d" in2="n" operator="arithmetic" k2="1" k3=".95" k4="-.475" result="a" />
                  <feComposite in="a" in2="d" operator="in" result="b" />
                  <feTurbulence type="fractalNoise" baseFrequency=".07" numOctaves="5" seed="44" />
                  <feColorMatrix values="0 0 0 0 0  0 0 0 0 0  0 0 0 0 0  0 0 7 0 -2.300" result="mask" />
                  <feComposite in="b" in2="mask" operator="in" />
                </filter>
                <filter id="rough" x="-.2" y="-.2" width="1.400" height="1.400" color-interpolation-filters="sRGB">
                  <feTurbulence type="fractalNoise" baseFrequency=".06" numOctaves="5" seed="7" result="t" />
                  <feDisplacementMap in="SourceGraphic" in2="t" scale="50" xChannelSelector="R" yChannelSelector="G" />
                  <feGaussianBlur stdDeviation="2" result="d" />
                  <feTurbulence type="fractalNoise" baseFrequency=".16" numOctaves="3" seed="2" />
                  <feColorMatrix values="1 0 0 0 0  1 0 0 0 0  1 0 0 0 0  0 0 0 0 1" result="n" />
                  <feComposite in="d" in2="n" operator="arithmetic" k2="1" k3=".36" k4="-.17" result="a" />
                  <feComposite in="a" in2="d" operator="in" />
                </filter>
                <filter id="coast" x="0" y="0" width="1" height="1" color-interpolation-filters="sRGB">
                  <feTurbulence type="fractalNoise" baseFrequency=".06" numOctaves="4" seed="5" result="t" />
                  <feDisplacementMap in="SourceGraphic" in2="t" scale="20" xChannelSelector="R" yChannelSelector="G" />
                </filter>
                <filter id="swirl" x="-.1" y="-.1" width="1.200" height="1.200" color-interpolation-filters="sRGB">
                  <feGaussianBlur in="SourceGraphic" stdDeviation="26" result="g" />
                  <feTurbulence type="fractalNoise" baseFrequency=".012 .006" numOctaves="4" seed="8" result="t" />
                  <feDisplacementMap in="g" in2="t" scale="70" xChannelSelector="R" yChannelSelector="G" />
                  <feGaussianBlur stdDeviation="2" />
                </filter>
                <filter id="cloud" x="-.3" y="-.3" width="1.600" height="1.600">
                  <feTurbulence type="fractalNoise" baseFrequency=".09" numOctaves="4" seed="21" result="t" />
                  <feDisplacementMap in="SourceGraphic" in2="t" scale="60" xChannelSelector="R" yChannelSelector="G" result="d" />
                  <feTurbulence type="fractalNoise" baseFrequency=".075" numOctaves="4" seed="6" />
                  <feColorMatrix values="0 0 0 0 0  0 0 0 0 0  0 0 0 0 0  0 14 0 0 -6.700" result="mask" />
                  <feComposite in="d" in2="mask" operator="in" />
                </filter>
                <filter id="soft" x="-.3" y="-.3" width="1.600" height="1.600"><feGaussianBlur stdDeviation="16" /></filter>
                <linearGradient id="sea" x1="0" y1="0" x2="0" y2="1">
                  <stop offset="0" stop-color="#7b9c8e" /><stop offset=".3" stop-color="#68a09b" /><stop offset=".5" stop-color="#539aa0" /><stop offset=".75" stop-color="#3a8a9d" /><stop offset="1" stop-color="#33859a" />
                </linearGradient>
                <clipPath id="water">
                  <path d="M0 0H300L285 195L320 225 400 200 460 198 520 240 555 300 585 328 640 328 690 288 735 296 785 355 806 430 835 500 880 565 860 572 815 515 790 440 770 370 725 318 690 315 650 340 580 345 540 320 500 275 440 255 400 260 350 285 290 285 262 290 258 350 262 420 245 450 245 530 255 575 285 575 285 630 250 655 262 700 270 742 300 715 330 740 350 780 360 850 345 900 348 960 335 1000 345 1040 320 1070 318 1120 295 1160 270 1220 268 1245 320 1200 350 1240 345 1290 300 1320 300 1360 320 1365 360 1310 390 1290 410 1230 420 1160 440 1090 480 1070 530 1090 590 1085 640 1040 690 1000 700 940 692 850 705 780 740 720 765 600 757 720 750 780 760 870 750 920 790 950 800 1020 805 1085 860 1095 840 1150 800 1160 720 1180 690 1165 680 1190 630 1250 690 1300 690 1320 640 1335 600 1315 560 1335 570 1400 600 1480 650 1490 700 1480 760 1440 740 1500 740 1560H0z" />
                </clipPath>
              </defs>
              <g filter="url(#landN)">
                <rect x="-120" y="-120" width="1820" height="1820" fill="#806153" />
                <g filter="url(#soft)">
                  <path d="M900 600L1100 540 1330 640 1260 720 1120 850 960 840z" fill="#9a786a" />
                  <path d="M730 0H980L900 120 840 260 740 190z" fill="#936c5a" /><path d="M850 0h90l-30 160-60 80z" fill="#5f4038" />
                  <path d="M720 0h40v200h-40z" fill="#3f3a2e" />
                  <path d="M1400 0h190v240l-110-30z" fill="#64484a" />
                  <path d="M1330 480h260v340l-160-90z" fill="#704e43" />
                  <path d="M1130 900l150-100 150 80-40 180-200 30z" fill="#7c5a49" />
                  <path d="M1290 640l70-30 70 140 60 120 100 120-30 70-100-60-140-170-50-110z" fill="#46311f" />
                  <path d="M1290 690l50 70 80 80 60 110-40 20-130-130z" fill="#25260f" />
                  <path d="M1440 1060l130-50v210l-90-30-100 30-60-60z" fill="#2d2312" />
                  <path d="M1340 1110l80-20 20 100-60 60z" fill="#262315" />
                  <path d="M1370 950h190v90l-130-30z" fill="#78533a" />
                  <path d="M1470 1240l100-30v100l-60-10z" fill="#9a7048" />
                  <path d="M940 1180l120-10 50 130 50 130-80 20-90-70-70-80z" fill="#433a2c" />
                  <path d="M1160 1200l210 20 10 170-180 20z" fill="#735240" />
                  <path d="M740 1420l250-60 150 90 430-20v160H740z" fill="#664b42" /><path d="M950 1450l110-50 60 90-80 50z" fill="#39382b" />
                  <path d="M1480 1420l90-70v120z" fill="#472722" />
                  <path d="M480 390l190-50 70 60-80 160-60 140-90-20-30-120z" fill="#4a3722" />
                  <path d="M520 400l100-30 20 60-80 50z" fill="#3e4228" />
                  <path d="M540 180h100l20 120-80 30z" fill="#3f3c2e" />
                  <path d="M1000 340l210-20 110 180-60 100-270-60z" fill="#797078" />
                  <path d="M1250 240l140 20 180-20v80l-200 30z" fill="#74626a" />
                </g>
              </g>
              <g filter="url(#cityN)" fill="#878a93">
                <g transform="translate(-10 -4)">
                  <path d="M400 262L450 258 500 285 540 350 545 390 490 400 500 440 480 500 500 570 500 620 520 680 530 730 560 740 590 745 620 690 640 620 660 560 680 510 720 450 720 380 690 340 760 340 790 400 800 450 805 500 820 530 800 560 770 570 755 620 720 670 680 690 670 750 640 800 600 860 590 890 640 930 680 960 670 1000 620 1050 590 1080 560 1060 560 1000 520 1000 540 1090 500 1060 470 1060 450 1090 435 1140 420 1230 400 1290 350 1340 310 1375 298 1330 345 1290 350 1240 320 1190 260 1230 270 1165 305 1110 305 1060 335 1030 385 980 330 980 330 900 342 850 330 780 315 740 285 712 345 700 375 660 370 600 330 600 300 600 290 560 340 500 400 450 410 400 470 380 430 340 410 300z" />
                  <path d="M262 300L300 290 400 300 330 330 280 350 260 420 245 400zM250 500L280 470 270 570 245 560zM250 650L280 640 270 740 250 700z" fill="#77736d" opacity=".8" />
                  <path d="M790 540L830 545 815 620 830 690 850 740 850 790 870 830 885 900 890 980 900 1030 880 1080 830 1080 815 1040 825 980 800 930 765 910 770 870 790 820 790 740 770 680 770 600z" fill="#8388a0" />
                  <path d="M850 590L880 640 930 700 940 780 970 830 935 830 900 720 860 660z" fill="#8a8694" opacity=".85" />
                  <path d="M950 930L1020 890 1080 860 1160 850 1200 880 1140 940 1110 960 1110 1060 1150 1100 1130 1170 1080 1150 1030 1080 1000 1040 1050 970 1020 920 960 1010 920 1060 900 1050z" fill="#828696" />
                  <path d="M850 1120L880 1090 960 1100 1030 1100 1090 1170 1000 1170 940 1200 900 1250 870 1290 780 1320 720 1310 650 1260 670 1200 710 1270 760 1290 810 1240 820 1160z" fill="#928580" />
                  <path d="M565 1335L600 1320 660 1350 740 1330 820 1320 900 1280 920 1330 880 1370 820 1400 760 1440 700 1480 650 1490 600 1475 570 1400z" fill="#6d605c" />
                  <path d="M880 280L1000 250 1060 340 1000 380 930 360zM1000 460L1120 400 1240 460 1310 560 1200 570 1100 520 1000 540zM1350 610L1430 630 1450 700 1380 700zM1270 590L1330 600 1310 670 1270 660zM870 600L940 590 960 620 900 640z" fill="#827e8b" opacity=".6" />
                  <path d="M730 300L810 300 830 360 790 350zM1280 300L1350 300 1330 350 1280 340zM850 1290L950 1290 900 1400 860 1400zM1100 1160L1130 1170 1110 1320 1090 1240z" fill="#827c7c" opacity=".55" />
                </g>
              </g>
              <g filter="url(#rough)">
                <path d="M265 330l60-20 80 70 70-20 0 30-70 40-50 20-60 90-30 30-15-130z" fill="#30302b" />
                <path d="M340 380l60-15 75 0-5 25-70 50-70 20-30-30z" fill="#191f26" />
                <path d="M290 285l60 0 50-30 20 15-60 35-60 10z" fill="#263c2b" />
                <path d="M255 650l80-30 40-30 0 60-20 60-60-10-30-10z" fill="#27282b" />
                <path d="M765 590L755 660 690 700 660 770 600 860 610 910 660 940 695 920 695 830 740 730zM770 650L782 710 795 790 780 860 760 910 755 850 755 750z" fill="#20272d" />
                <path d="M765 920l40 40 10 110 40 15-40 10-20-90z" fill="#1d2733" />
                <path d="M870 1080l90-50 50-50 20-60 10 50 10 50-20 40 20 40-70-20-70 0z" fill="#202a35" />
                <path d="M690 1180l50 5 70-20 10 60-20 70-60 10-80-50 20-60z" fill="#2b3c30" />
                <path d="M440 640l50 0 30 50 10 60-50-10-30-50z" fill="#4d5953" opacity=".7" />
                <path d="M545 730l40 5 0 30-40 10z" fill="#24492f" />
                <path d="M605 1180l35-20 10 20-25 25zM690 1160l30 10-10 20z" fill="#4e4842" />
                <path d="M570 990l60-20 30 30-20 40-60 50z" fill="#4a3c30" />
                <path d="M480 1070l20-30 40 20 20 30-50 0z" fill="#273644" />
                <path d="M735 1440l30-20 10 130h-35z" fill="#1f3a29" /><path d="M870 600l30 40-20 20z" fill="#2b2e36" />
                <path d="M860 560l60 10 60-10-40 25-60 5z" fill="#26303b" />
                <path d="M825 570L845 600 860 680 920 720 945 800 940 900 930 1010 900 1010 885 880 870 790 830 720z" fill="#503a2a" opacity=".85" />
              </g>
              <g filter="url(#coast)">
                <g clip-path="url(#water)">
                  <rect x="-10" y="-10" width="1600" height="1600" fill="url(#sea)" />
                  <g filter="url(#swirl)">
                    <path d="M130 -60h290v300l600 80v260H200l30 120 60 60-10 60-100-110-30-200 30-200z" fill="#948f87" opacity=".85" />
                    <path d="M290 740l60 60-20 200-50 160-30 190 40 100 250 110 100-60 100-180-40-90-80-20-160-40z" fill="#629096" opacity=".6" />
                    <path d="M560 500h340v680l-200 30-80-70-60-30z" fill="#748488" />
                    <path d="M450 1080l150 20 120 10 80 60-120 20-60 130-60-60-110-10z" fill="#788d92" opacity=".8" />
                    <path d="M560 1280l150 20 50 300-220 0-110-40z" fill="#788889" opacity=".75" />
                    <path d="M240 1350l100 60 200 30 30 160H250z" fill="#6a9698" opacity=".45" />
                    <path d="M-80 900h180l60 200-20 250-30 300H-80z" fill="#167494" opacity=".5" />
                  </g>
                </g>
                <path d="M470 205l40 40 30 60" fill="none" stroke="#55645e" stroke-width="7" />
                <path d="M290 195l50 25 90-20 60 20 20 20-60-30-70 0-60 20z" fill="#2f4035" />
                <g fill="none" stroke-linecap="round" stroke-linejoin="round">
                  <path d="M555 300L585 330 640 330 690 295 735 305 780 360 800 430 830 505 870 570" stroke="#59646a" stroke-width="16" />
                  <path d="M870 572L950 562 972 530 972 490 1010 458 1070 488 1098 460 1090 430 1062 400 1075 365 1120 352 1145 362 1160 388 1190 388 1250 375" stroke="#262a51" stroke-width="10" />
                  <path d="M1250 375l25-60 20-110 60-60 30-50 40-20 40-50 35 10 25 50 30 10" stroke="#3c3e4a" stroke-width="6" />
                  <path d="M1280 300l60-10 60 0 40 30 60-10 60-40M1200 395l40 40 60-30 70 40 40 80 15 110 30 90 30 70 40 30 30-20" stroke="#3d4541" stroke-width="5" />
                  <path d="M1310 740l80 110 60 80 60 50 10 60" stroke="#263a20" stroke-width="5" />
                  <path d="M810 370l0-80 30-25 40 25M870 310l70-20" stroke="#494c4b" stroke-width="5" />
                  <path d="M270 570l30-50 40-40 20-40 40-20" stroke="#66706f" stroke-width="12" />
                  <path d="M285 700l50-40 35-30" stroke="#4e5a67" stroke-width="9" /><path d="M340 655l30-40v30" stroke="#22265a" stroke-width="8" />
                  <path d="M700 1195l40 40 30 0 30-30" stroke="#74868a" stroke-width="11" />
                  <path d="M385 960l50-15 35-30" stroke="#23304a" stroke-width="8" />
                </g>
                <ellipse cx="355" cy="1000" rx="24" ry="30" fill="#557f86" /><path d="M372 960l15 5-5 45z" fill="#1c3358" />
                <path d="M550 680l25-30 30 20 0 40-50 8z" fill="#253b47" />
                <path d="M1420 1230l20 50 30 10 25-20-10 40-20 20-50 8-5-30 15-30z" fill="#0d1c4b" />
                <path d="M965 1350l30 0-15 25z" fill="#2e7a45" />
                <path d="M945 355l20 0-5 12z" fill="#2f7148" />
              </g>
              <g filter="url(#cloud)" fill="#e6e3e0">
                <path d="M820 440L870 390 950 395 940 450 900 480 870 460 830 480zM1075 190L1110 170 1130 210 1080 215zM1125 180L1175 165 1180 230 1140 220zM1120 250L1190 235 1240 240 1210 280 1150 290zM1190 150L1230 140 1225 165 1195 170zM1280 120L1350 80 1360 105 1320 135 1280 140zM975 380L1010 370 1005 400 980 405zM900 600L945 590 940 620 910 620zM1445 35L1480 30 1475 50zM1060 205L1080 215 1070 240z" />
              </g>
              <path d="M470 830l22-5 3 22-30 2zM425 848h55v5h-55z" fill="#f1eeee" />
              <g filter="url(#rough)" fill="#9c8c84"><path d="M590 905l35-10 15 30-35 15zM880 1090l100-6 60 25-30 25-90 5-40-15z" /></g>
              <path d="M665 758h25v15h-25z" fill="#b5a89f" /><path d="M625 1245l25 20M635 1240l22 18" stroke="#ddd" stroke-width="5" />
            </svg>
          </div>
          <div class="mvscroll"><svg class="chev" viewBox="0 0 20 16"><path d="M1.500 13L10 4.500l8.500 8.500" /></svg><i></i><svg class="chev" viewBox="0 0 20 16"><path d="M1.500 3L10 11.500 18.500 3" /></svg></div>
        </div>
        <div class="mapfoot">
          <div class="vbtn"><svg viewBox="0 0 16 16" v-html="ic.viewMap"></svg></div>
          <svg class="f2" viewBox="0 0 16 16" v-html="ic.viewDoc"></svg>
          <i class="fsep"></i>
          <svg class="f3" viewBox="0 0 16 16" v-html="ic.refresh"></svg>
          <svg class="f4" viewBox="0 0 16 16" v-html="ic.pause"></svg>
          <svg class="chev f5" viewBox="0 0 16 20"><path d="M13 1.500L4.500 10l8.500 8.500" /></svg>
          <i class="thumb"></i>
          <svg class="chev f6" viewBox="0 0 16 20"><path d="M3 1.500l8.500 8.500L3 18.500" /></svg>
        </div>
      </section>

      <div class="docks">
        <div v-for="d in docks" :key="d.t" class="dock" :style="{ height: d.h + 'px', marginTop: (d.gap || 0) + 'px' }">
          <svg viewBox="0 0 16 16" v-html="ic[d.k]"></svg>
          <span v-fit="d.f">{{ d.t }}</span>
        </div>
      </div>
    </main>

    <footer class="status"><i></i><i class="s2"></i><span v-fit="412">306660.055&nbsp; 2151558.397 Meters</span></footer>

    <div class="taskbar">
      <svg class="wall" viewBox="0 0 580 88" preserveAspectRatio="none">
        <defs><filter id="wf" x="-.1" y="-.1" width="1.200" height="1.200"><feTurbulence type="fractalNoise" baseFrequency=".05" numOctaves="3" result="t" /><feDisplacementMap in="SourceGraphic" in2="t" scale="16" xChannelSelector="R" yChannelSelector="G" /><feGaussianBlur stdDeviation="1" /></filter></defs>
        <g filter="url(#wf)">
          <path d="M0 0h330v60l-50 0-110-20-50-25-70 0-20 5z" fill="#876427" /><path d="M10 0l60 40 20 48h8L80 30l-40-20z" fill="#8b7a30" />
          <path d="M150 0h160l30 88h-80l-60-60z" fill="#9a5a22" /><path d="M210 0h60l40 50-30 0z" fill="#6b5230" />
          <path d="M330 0h200l-30 88H330z" fill="#93502f" /><path d="M440 0l80 60-20 28-60-30-60-58z" fill="#6b5030" /><path d="M440 30l60 45 8 13h-68z" fill="#a94c28" /><path d="M480 0h30l8 60-20-20z" fill="#a34b27" />
          <path d="M565 0l-10 40-2 48h6l2-50 10-38z" fill="#94842a" />
        </g>
      </svg>
      <div class="start"><svg viewBox="0 0 52 52"><path d="M0 7l22-3v21H0zM24 3.500L52 0v25H24zM0 27h22v21L0 45zM24 27h28v25l-28-3.500z" fill="#fff" /></svg></div>
      <div v-for="t in tasks" :key="t.k" class="task" :class="{ run: t.run, active: t.active }">
        <svg viewBox="0 0 32 32" :style="{ width: t.s + 'px', height: t.s + 'px' }" v-html="ic[t.k]"></svg>
      </div>
      <div class="tray">
        <svg class="kb" viewBox="0 0 60 36"><rect x="1" y="1" width="58" height="34" rx="3" fill="#fff" stroke="#2c2110" stroke-width="1" /><rect x="4" y="5" width="52" height="26" fill="#2c2110" /><path d="M6 9.500h48M6 18h48M6 26.500h48" stroke="#fff" stroke-width="6" /><path d="M13.500 5v16M21.500 5v16M29.500 5v16M37.500 5v16M45.500 5v16M15 22v9M44 22v9" stroke="#2c2110" stroke-width="2" /></svg>
        <div class="batt"><i></i><span>54%</span></div>
        <i class="up"></i>
        <svg class="wheel" viewBox="0 0 40 40"><circle cx="20" cy="20" r="19.500" fill="#777" /><circle cx="20" cy="20" r="11.500" fill="#555" stroke="#fff" stroke-width="2.500" /><circle cx="20" cy="20" r="13.500" fill="none" stroke="#fff" stroke-width="2" stroke-dasharray="2 1.500" /><path d="M20 20v10M20 20l-9-7M20 20l9-7" stroke="#fff" stroke-width="3" /></svg>
        <svg class="flag" viewBox="0 0 40 40"><path d="M3 1v37" stroke="#fff" stroke-width="4" /><path d="M6 2c8-2 10 3 15 2v5c6 3 10 3 15 2-2 3-3 6-3 10-8 2-14-4-27-1z" fill="#f2f2f2" stroke="#2c2110" /><circle cx="29" cy="29" r="10" fill="#d4121c" /><path d="M25 25l8 8M33 25l-8 8" stroke="#fff" stroke-width="3" /></svg>
        <svg class="sig" viewBox="0 0 40 32"><path d="M0 22h6v-4h8v-6h8V6h8V0h10v32H0z" fill="#2c2110" /><path d="M2 24h5v7H2zM10 20h5v11h-5zM17.500 15h5v16h-5zM25 8.500h5V31h-5z" fill="#fff" /><path d="M32.500 2h5v29h-5z" fill="#8a8a8a" /></svg>
        <svg class="spk" viewBox="0 0 40 38"><path d="M1 12h7l9-10v34l-9-10H1z" fill="#fff" stroke="#2c2110" stroke-width="1.500" /><path d="M22 14c2 3 2 7 0 10M27 10c4 5 4 13 0 18M32 6c6 7 6 19 0 26" fill="none" stroke="#e8e4dc" stroke-width="1.800" /></svg>
        <span v-fit="57" class="eng">ENG</span>
        <div class="clock"><span v-fit="69">15:08</span><span v-fit="150">28/03/2021</span></div>
      </div>
    </div>
  </div>
</template>

<style>
body { background: #f0f0f0; overflow: hidden; }
</style>

<style scoped>
* { box-sizing: border-box; }
.screen { width: 3200px; height: 1800px; display: flex; flex-direction: column; background: linear-gradient(90deg, #f0f0f0 900px, #f5f5f5 1700px, #fbfbfb 2700px); font-family: "Open Sans", "Noto Sans", sans-serif; font-size: 28px; color: #15131a; overflow: hidden; }
.defs { position: absolute; }
svg { display: block; flex: none; }
span, h1, h2 { white-space: nowrap; flex: none; }
i, em { font-style: normal; display: block; flex: none; }

.titlebar { height: 58px; flex: none; background: #eabd70; border-bottom: 1px solid #c99d53; display: flex; align-items: center; justify-content: space-between; }
.appicon { width: 42px; height: 42px; margin-left: 1px; }
h1 { margin: 4px 0 0 1292px; font-weight: 400; font-size: 36px; line-height: 50px; color: #2a2620; }
.caption { flex: 1; display: flex; justify-content: flex-end; height: 51px; align-self: flex-start; padding-right: 3px; align-items: center; }
.caption .min { width: 17px; height: 3px; background: #26221c; margin: 10px 49px 0 0; }
.caption b { width: 116px; height: 51px; margin-left: 23px; background: #c75050; display: flex; align-items: center; justify-content: center; }

.menubar { height: 62px; flex: none; display: flex; padding: 5px 0 0 10px; position: relative; z-index: 5; }
.menu { height: 53px; display: flex; align-items: center; justify-content: center; position: relative; padding-bottom: 2px; }
.menu.open { background: #fcfcfc; border: 2px solid #858585; border-bottom: 0; box-shadow: 7px 4px 6px -2px rgba(0, 0, 0, .25); padding-bottom: 4px; }
.dropdown { position: absolute; left: -2px; top: 49px; width: 420px; height: 361px; padding: 2px 1px 0 2px; border: 2px solid #858585; background: linear-gradient(90deg, #fcfcfc 0 6px, #f0f0f0 64px, #fdfdfd 64px); box-shadow: 8px 8px 8px -2px rgba(0, 0, 0, .35); display: flex; flex-direction: column; }
.dropdown::before { content: ""; position: absolute; left: 0; top: -2px; width: 176px; height: 2px; background: #d8d8d8; }
.entry { height: 54.600px; flex: none; display: flex; align-items: center; justify-content: space-between; padding: 0 15px 1px 81px; border: 3px solid transparent; }
.entry.hot { background: #c0ddfb; border-color: #3d9bff; }
.entry .arrow { border: 8px solid transparent; border-left: 11px solid #111; border-right: 0; }
.dropdown hr { width: 331px; height: 3px; border: 0; background: #c4c4c4; margin: 3px 0 2px auto; flex: none; }

.bars { height: 131px; flex: none; display: flex; flex-direction: column; gap: 3px; }
.bar { height: 63px; background: linear-gradient(#fcfcfc, #f0f0f0); border-radius: 6px; display: flex; align-items: center; }
.standard { width: 1542px; margin-left: 8px; padding-top: 2px; }
.row2 { display: flex; }
.tools { width: 1000px; margin-left: 8px; }
.classbar { width: 990px; margin-left: 534px; }
.grip { width: 4px; height: 36px; margin-left: 7px; background: repeating-linear-gradient(#b4b4b4 0 5px, transparent 5px 10px); }
.sep { width: 2px; height: 36px; background: #bdbdbd; flex: none; }
.ico { width: 38px; height: 38px; }
.del { width: 32px; }
.scale { width: 682px; height: 52px; margin: 0 0 0 6px; background: #fff; border: 3px solid #b3b3b9; padding: 0 0 6px 6px; display: flex; align-items: center; }
.m14 { margin-left: 14px; }
.model { margin-left: 15px; width: 41px; }
.endcap { width: 28px; height: 63px; margin-left: auto; background: linear-gradient(#f3f3f3, #a0a0a0); display: flex; flex-direction: column; align-items: center; justify-content: flex-end; padding-bottom: 8px; gap: 5px; }
.endcap i { width: 13px; height: 3px; background: #111; box-shadow: 2px 2px #fff; }
.endcap b { border: 7px solid transparent; border-top: 8px solid #111; border-bottom: 0; }
.slot { height: 56px; display: flex; align-items: center; justify-content: center; }
.slot.on { width: 55px; background: #e1edfa; border: 3px solid #3d9bff; }
.slot.clear, .slot.pointer { width: 33px; }
.standard .undo, .standard .redo { width: 36px; }
.cls { margin: 0 0 3px 17px; }
.tri { border: 7px solid transparent; border-top: 9px solid #111; border-bottom: 0; margin-left: 7px; }
.tri.gray { border-top-color: #8f8f8f; }
.classbar .m14 { margin-left: 13px; }
.combo { width: 448px; height: 48px; margin-left: 8px; border: 4px solid #7f7f7f; border-right-color: #fff; border-bottom-color: #fff; background: #f0f0f0; display: flex; justify-content: flex-end; }
.btn { width: 42px; height: 40px; border: 3px solid #fbfbfb; border-right-color: #7b7b7b; border-bottom-color: #7b7b7b; display: flex; align-items: center; justify-content: center; }
.btn .tri { margin: 0; border-width: 10px 10px 0; }
.c1 { margin-left: 9px; } .c2 { margin-left: 20px; width: 34px; } .c3 { margin-left: 16px; } .c4 { margin-left: 15px; } .c5 { margin-left: 13px; } .c6 { margin-left: 21px; }

.work { height: 1409px; flex: none; display: flex; }
.toc { width: 500px; flex: none; display: flex; flex-direction: column; }
.tochead { height: 63px; flex: none; background: linear-gradient(90deg, #bccad8, #d6e4f1); display: flex; align-items: center; padding-left: 10px; }
h2 { font-weight: 400; font-size: 38px; margin: 3px 0 0; line-height: 50px; width: 420px; }
.tochead .x { margin-left: 17px; }
.toctools { height: 64px; flex: none; margin: 0 0 0 8px; background: linear-gradient(#fdfdfd, #f0f0f0); display: flex; align-items: center; padding: 0 0 2px 8px; }
.big { width: 41px; height: 41px; }
.toctools .slot { height: 55px; margin: 2px 0 0 8px; }
.t3 { margin-left: 7px; } .t4 { margin-left: 14px; } .toctools .sep { margin-left: 13px; } .t5 { margin-left: 13px; }
.treebox { width: 497px; height: 1281px; flex: none; border: 3px solid #868c96; background: #fff; margin-top: 1px; padding: 2px; display: flex; flex-direction: column; }
.treerow { display: flex; height: 1231px; }
.tree { width: 447px; overflow: hidden; flex: none; }
.node { height: 45px; display: flex; align-items: center; }
.node span { display: block; line-height: 40px; margin-top: -6px; }
.chan { display: flex; flex: none; }
.leaf { padding-left: 100px; }
.sw { width: 37px; height: 27px; border: 2px solid #6e6e6e; margin: 3px 8px 0 0; }
.path { padding-left: 12px; }
.fold { width: 38px; height: 36px; margin-right: 13px; }
.layer { padding-left: 20px; }
.minus { width: 22px; height: 22px; border: 2px solid #a9a9a9; border-radius: 3px; background: linear-gradient(#3a5db0, #3a5db0) center / 13px 2px no-repeat #f3f3f3; margin: 6px 20px 0 0; }
.check { width: 28px; height: 28px; border: 3px solid #111; margin-right: 15px; background: #fff; }
.layer em { height: 45px; width: 293px; padding-left: 6px; background: #3399ff; color: #fff; display: flex; align-items: center; }
.layer em.off { background: none; color: inherit; width: auto; }
.label { padding-left: 157px; }
.stretch { display: flex; padding-left: 100px; }
.ramp { width: 33px; height: 89px; background: linear-gradient(#f4f4f4, #808080 50%, #000); margin-right: 12px; }
.stretch div { display: flex; flex-direction: column; margin-top: -8px; gap: 50px; }
.stretch span { line-height: 40px; align-self: flex-start; }
.vscroll { width: 40px; background: #f0f0f0; display: flex; flex-direction: column; align-items: flex-start; }
.chev path { fill: none; stroke: #606060; stroke-width: 5; }
.vscroll .chev { width: 20px; height: 16px; margin: 14px 0 0 9px; }
.vscroll i { width: 38px; height: 271px; margin-top: 192px; background: #cdcdcd; }
.vscroll .dn { margin-top: auto; margin-bottom: 13px; }
.hscroll { height: 40px; background: #f0f0f0; display: flex; align-items: center; margin-top: 1px; }
.hscroll .chev { width: 16px; height: 18px; margin-left: 12px; }
.hscroll i { width: 145px; height: 38px; background: #cdcdcd; margin-left: 44px; }
.hscroll .rt { margin-left: 200px; }

.mapwin { width: 2630px; height: 1410px; flex: none; margin-left: 11px; border: 5px solid #808080; border-right: 3px solid #e6e6e6; border-bottom: 3px solid #e3e3e3; background: #f0f0f0; display: flex; flex-direction: column; }
.mapmain { height: 1363px; display: flex; }
.canvas { width: 2585px; background: #fefefe; padding: 82px 0 0 336px; border-right: 2px solid #e2e2e2; border-bottom: 3px solid #e2e2e2; }
.raster { width: 1198px; height: 1207px; }
.mvscroll { width: 36px; display: flex; flex-direction: column; align-items: center; }
.mvscroll .chev { width: 20px; height: 16px; margin: 14px 0 0; }
.mvscroll i { width: 35px; height: 1272px; background: #cdcdcd; margin-top: 12px; }
.mapfoot { height: 39px; display: flex; align-items: center; }
.vbtn { width: 41px; height: 38px; background: #b5d4f3; border: 2px solid #66aaee; border-top: 0; border-left: 0; display: flex; align-items: center; justify-content: center; }
.mapfoot svg { width: 21px; height: 21px; margin-bottom: 5px; }
.vbtn svg { margin: 0 0 4px; }
.f2 { margin-left: 11px; }
.fsep { width: 2px; height: 32px; margin: 0 0 5px 16px; background: #8c8c8c; }
.f3 { margin-left: 23px; } .f4 { margin-left: 21px; }
.mapfoot .chev { width: 16px; height: 18px; }
.f5 { margin-left: 25px; }
.thumb { width: 2307px; height: 35px; background: #cdcdcd; margin: 0 0 3px 11px; }
.f6 { margin-left: 17px; }

.docks { padding: 5px 0 0 9px; display: flex; flex-direction: column; }
.dock { width: 60px; flex: none; border: 2px solid #a0a0a0; border-radius: 7px 0 0 7px; background: #f0f0f0; padding: 9px 0 0 3px; }
.dock svg { width: 41px; height: 41px; }
.dock span { display: inline-block; writing-mode: vertical-rl; line-height: 40px; font-size: 31px; color: #6c6c6c; margin: 8px 0 0 2px; }

.status { height: 53px; flex: none; background: #f0f0f0; display: flex; align-items: center; padding-left: 2504px; }
.status i { width: 4px; height: 46px; background: #f7f7f7; border-left: 2px solid #e6e6e6; }
.status .s2 { margin-left: 46px; }
.status span { margin-left: 10px; margin-top: 3px; }

.taskbar { height: 87px; flex: none; background: linear-gradient(#614e30, #58462a); border-top: 2px solid #9a8766; display: flex; position: relative; }
.wall { position: absolute; left: 1055px; top: 0; width: 580px; height: 86px; }
.start { width: 90px; display: flex; align-items: center; justify-content: center; position: relative; }
.start svg { width: 52px; height: 52px; }
.task { width: 124px; height: 86px; margin: 0 2px; flex: none; display: flex; align-items: center; justify-content: center; position: relative; }
.task.run { background: linear-gradient(90deg, rgba(255, 255, 255, .2) 116px, transparent 116px 118px, rgba(255, 255, 255, .2) 118px); border: 2px solid rgba(255, 255, 255, .35); padding-right: 10px; }
.task.active { background: rgba(255, 240, 225, .5); border: 2px solid rgba(255, 255, 255, .85); }
.tray { margin-left: auto; width: 890px; display: flex; align-items: center; color: #fff; }
.kb { width: 60px; height: 36px; }
.batt { width: 101px; height: 51px; margin-left: 36px; border: 5px solid #fff; outline: 1px solid #2c2110; background: #444; position: relative; display: flex; align-items: center; justify-content: center; font-size: 28px; }
.batt i { position: absolute; left: 1px; top: 1px; width: 54px; height: 38px; background: #00d068; }
.batt::after { content: ""; position: absolute; right: -13px; top: 9px; width: 8px; height: 24px; background: #fff; }
.batt span { position: relative; letter-spacing: -1px; margin-top: -5px; text-shadow: 2px 2px 1px #222; }
.up { border: 10px solid transparent; border-bottom: 12px solid #e6e6e6; border-top: 0; margin: 46px 0 0 78px; }
.wheel { width: 40px; height: 40px; margin-left: 70px; } .flag { width: 41px; height: 40px; margin-left: 20px; }
.sig { width: 40px; height: 32px; margin-left: 19px; } .spk { width: 40px; height: 38px; margin-left: 20px; }
.eng { margin: 4px 0 0 30px; font-size: 29px; }
.clock { margin: 0 0 0 26px; width: 170px; display: flex; flex-direction: column; align-items: center; }
.clock span { line-height: 40px; font-size: 29px; }
</style>
